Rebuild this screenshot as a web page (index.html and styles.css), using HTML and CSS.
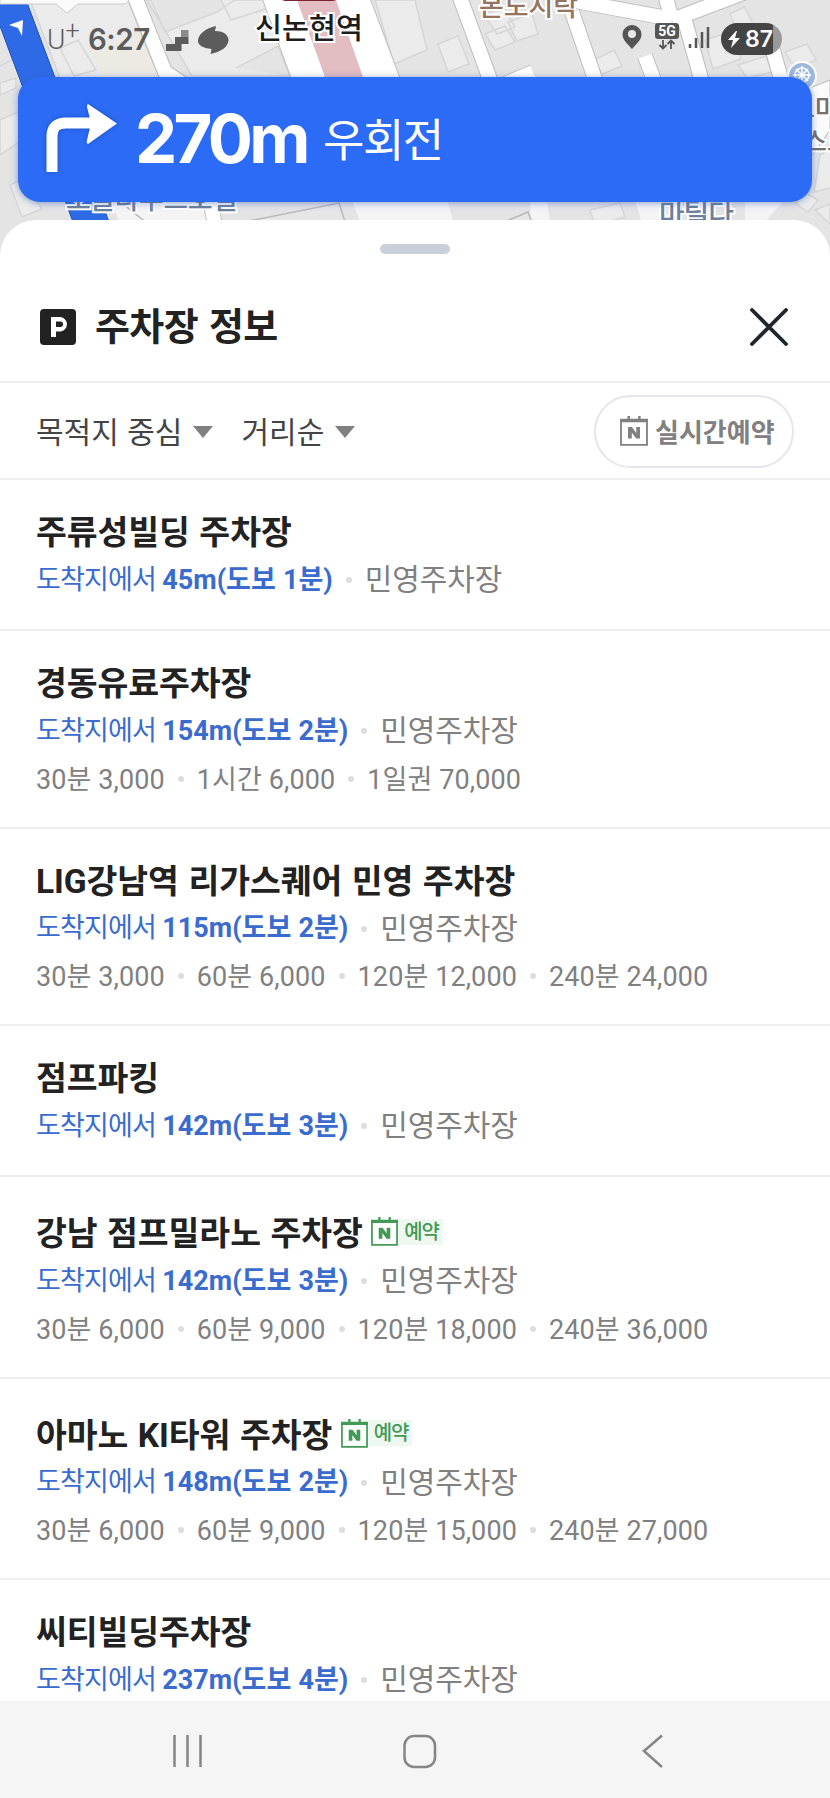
FILE: index.html
```html
<!DOCTYPE html>
<html lang="ko">
<head>
<meta charset="utf-8">
<title>주차장 정보</title>
<link rel="stylesheet" href="styles.css">
</head>
<body>
<svg width="0" height="0" class="sprite">
  <symbol id="cal" viewBox="0 0 28 30"><path d="M1 4h26v24.800H1z" fill="none" stroke="currentColor" stroke-width="1.800"/><path d="M0 2.800h28v3.400H0zM7.500 0h2.400v4H7.500zM18.200 0h2.400v4h-2.400z" fill="currentColor"/><path d="M8 22.500V11h4l4.200 5.900V11H20v11.500h-3.900l-4.300-6v6z" fill="currentColor"/></symbol>
</svg>
<div class="screen">
  <svg class="map" viewBox="0 0 830 260">
    <rect width="830" height="260" fill="#e4e4e4"/>
    <g fill="#ebebeb" stroke="#d6d6d6" stroke-width="1.500">
      <path d="M30 0h98l30 78H60zM60 48l18-8 18 30-22 6zM134 0l13 0 45 76h100L265 0h-30l-18 12-52 20-14-32zM221 0l10 20 50-16M236 68l42-22 12 30M0 66l12-6M0 83l16-5v10L0 95zM0 120l22-10v30L0 155z"/>
      <path d="M375 0h40l12 50-33 14zM438 44l20-8 11 28-21 8zM485 34l20-8 10 16-20 8zM484 14l20-5 11 18-18 7zM508 22l24-8 6 20-21 7zM594 60l20-10 8 16-20 8zM705 40l28-9 8 28-28 10zM738 65l28-9 6 16-25 6zM785 52l22-8 9 16-20 9zM730 14l14-7 20 36-18 8zM10 185l12-6 20 30-20 8zM590 210l30-7 5 14-30 8zM820 155l14-8v40l-20 5zM800 190l18 10-10 12-12-8zM815 210l15-6v20z"/>
    </g>
    <path d="M92 52l46-22 21 48H101z" fill="#edeae3"/>
    <path d="M110 200h95l8 30h-90zM352 200h95l9 30h-93zM530 200h17l4 30h-20zM635 200h25l14 30h-30zM745 200h40l-28 30h-12z" fill="#f4f4f4"/>
    <path d="M490 228l38-16 6 16M229 225l110-22 8 25M118 200l30 24" fill="#e6e6e6" stroke="#b8b8b8" stroke-width="1.500"/>
    <path d="M830 80l-40 16v90l40-56z" fill="#fbfbfb" stroke="#bbb"/>
    <g fill="none" stroke="#bdbdbd" stroke-width="16"><path d="M133-8l32 80 30 20M458-8l33 90M572 12l24 70M570 0L672 19M682 10l20 72M672 20l92-35M665-6l7 26M645 56l11 30M770 40l13 46M505 84l28-12M209 195l8 40"/></g>
    <g fill="none" stroke="#fff" stroke-width="14"><path d="M133-8l32 80 30 20M458-8l33 90M572 12l24 70M570 0L672 19M682 10l20 72M672 20l92-35M665-6l7 26M645 56l11 30M770 40l13 46M505 84l28-12M209 195l8 40"/></g>
    <path d="M262-2h108l30 80H291z" fill="#fff" stroke="#bdbdbd"/>
    <path d="M297 0h39l28 80h-38z" fill="#e2bdc2"/>
    <rect x="278" y="-20" width="62" height="21" rx="8" fill="#7d2333"/>
    <path d="M-6-10L26 0 112 230 76 230-6 10z" fill="#2f6ae6" stroke="#1c4fba"/>
    <path d="M9 25l14-5-1 16-4-8z" fill="#fff"/>
    <path d="M0-2h129q0 6-6 6H78l-11 9-11-9H0z" fill="#fafafa" stroke="#ccc"/>
    <g class="place">
      <text x="255" y="39" font-size="29" textLength="108" lengthAdjust="spacingAndGlyphs" fill="#1d1d1d">신논현역</text>
      <text x="479" y="16" font-size="27" textLength="99" fill="#94745c">본도시락</text>
      <text x="66" y="209" font-size="27" textLength="171" fill="#6f819c">오클라우드호텔</text>
      <text x="659" y="224" font-size="28" textLength="75" fill="#6f819c">마틸다</text>
      <text x="791" y="118" font-size="26" fill="#77706a">꼬마</text>
      <text x="803" y="151" font-size="26" fill="#77706a">스토</text>
    </g>
    <circle cx="802" cy="76" r="14" fill="#9bb8df" stroke="#fff" stroke-width="2"/>
    <g stroke="#fff" stroke-width="1.500" fill="none"><circle cx="802" cy="75" r="7"/><path d="M793 75h18M802 66v18M796 69l12 12M808 69l-12 12"/></g>
  </svg>
  <header class="status">
    <span class="carrier">U<sup>+</sup></span><span class="time">6:27</span>
    <svg class="apps" viewBox="0 0 64 30"><path d="M0 27v-7h9v-7h13.500v7h-7v7z" fill="#5c5c5c"/><path d="M15 6h7.500v7H15z" fill="#8b8b8b"/><path d="M32 17c0-7 8-13 18-15l-1 5c10 0 13.500 5 13.500 9 0 7-8 12-18 14l1-5c-9-1-13.500-4-13.500-8z" fill="#5c5c5c"/></svg>
    <span class="gap"></span>
    <svg class="sys" viewBox="0 0 90 32"><path d="M10 2a9.500 9.500 0 0 1 9.500 9.500C19.500 17 14 21 10 26 6 21 .5 17 .5 11.500A9.500 9.500 0 0 1 10 2z" fill="#555"/><circle cx="10" cy="11" r="4" fill="#e8e8e8"/><rect x="33" y="0" width="24" height="16" rx="3" fill="#555"/><text x="45" y="12.800" text-anchor="middle" class="g5">5G</text><path d="M41 17v8M37.500 22l3.500 3.500 3.500-3.500M49 26v-8M45.500 21l3.500-3.500 3.500 3.500" fill="none" stroke="#555" stroke-width="1.800"/><path d="M68 25v-4M74 25V15M80 25V9M86 25V4" stroke="#555" stroke-width="2.500"/></svg>
    <span class="battery"><svg viewBox="0 0 12 17"><path d="M8 0L0 9h5l-2 8 9-10H7l2-7z" fill="#fff"/></svg>87</span>
  </header>
  <section class="turn">
    <svg viewBox="0 0 72 70"><path d="M6 69V33Q6 20 20 20H46" fill="none" stroke="#fff" stroke-width="11"/><path d="M42 1L71 20.500 42 41Q40 40 41 37L45 20 41 4Q41 1 42 1z" fill="#fff"/></svg>
    <strong>270m</strong><span>우회전</span>
  </section>
  <main class="sheet">
    <div class="handle"></div>
    <div class="head">
      <svg class="p" viewBox="0 0 36 36"><rect width="36" height="36" rx="4" fill="#222"/><path fill-rule="evenodd" d="M11 8h9.500a7.300 7.300 0 0 1 0 14.500H16V28h-5zM16 12.500v5.500h4.300a2.700 2.700 0 0 0 0-5.500z" fill="#fff"/></svg>
      <h1>주차장 정보</h1>
      <svg class="x" viewBox="0 0 38 38"><path d="M2 2l34 34M36 2L2 36" stroke="#20262c" stroke-width="3.800" stroke-linecap="round"/></svg>
    </div>
    <div class="filters">
      <span>목적지 중심</span><i></i><span>거리순</span><i></i>
      <button><svg><use href="#cal"/></svg>실시간예약</button>
    </div>
    <ul>
      <li><h2>주류성빌딩 주차장</h2><p class="meta"><span>도착지에서 <b>45m(도보 1분)</b></span><em>민영주차장</em></p></li>
      <li><h2>경동유료주차장</h2><p class="meta"><span>도착지에서 <b>154m(도보 2분)</b></span><em>민영주차장</em></p><p class="fees"><span>30분 3,000</span><span>1시간 6,000</span><span>1일권 70,000</span></p></li>
      <li><h2>LIG강남역 리가스퀘어 민영 주차장</h2><p class="meta"><span>도착지에서 <b>115m(도보 2분)</b></span><em>민영주차장</em></p><p class="fees"><span>30분 3,000</span><span>60분 6,000</span><span>120분 12,000</span><span>240분 24,000</span></p></li>
      <li><h2>점프파킹</h2><p class="meta"><span>도착지에서 <b>142m(도보 3분)</b></span><em>민영주차장</em></p></li>
      <li class="tagged"><h2>강남 점프밀라노 주차장<span class="tag"><svg><use href="#cal"/></svg><small>예약</small></span></h2><p class="meta"><span>도착지에서 <b>142m(도보 3분)</b></span><em>민영주차장</em></p><p class="fees"><span>30분 6,000</span><span>60분 9,000</span><span>120분 18,000</span><span>240분 36,000</span></p></li>
      <li class="tagged"><h2>아마노 KI타워 주차장<span class="tag"><svg><use href="#cal"/></svg><small>예약</small></span></h2><p class="meta"><span>도착지에서 <b>148m(도보 2분)</b></span><em>민영주차장</em></p><p class="fees"><span>30분 6,000</span><span>60분 9,000</span><span>120분 15,000</span><span>240분 27,000</span></p></li>
      <li><h2>씨티빌딩주차장</h2><p class="meta"><span>도착지에서 <b>237m(도보 4분)</b></span><em>민영주차장</em></p></li>
    </ul>
  </main>
  <nav>
    <svg viewBox="0 0 830 97"><g fill="none" stroke="#858585" stroke-width="2.500"><path d="M174.500 34v32M187.500 34v32M200.500 34v32"/><rect x="404.500" y="35" width="30.500" height="31" rx="9.500"/><path d="M662 34.500L644 50l18 16"/></g></svg>
  </nav>
</div>
</body>
</html>
```
FILE: styles.css
```css
* { box-sizing: border-box; margin: 0; padding: 0; }
body { background: #fff; font-family: Roboto, "Noto Sans CJK KR", sans-serif; }
svg { display: block; flex: none; }
.sprite { position: absolute; }
.screen { position: relative; width: 830px; height: 1798px; overflow: hidden; display: flex; flex-direction: column; }
.map { position: absolute; left: 0; top: 0; width: 830px; height: 260px; }
.place text { font-family: "Noto Sans CJK KR", sans-serif; font-weight: 500; paint-order: stroke; stroke: #fff; stroke-width: 4px; }
.status { position: relative; height: 77px; padding: 1px 48px 0 47px; display: flex; align-items: center; color: #5c5c5c; }
.carrier { font: 300 28px Roboto, sans-serif; width: 41px; white-space: nowrap; }
.carrier sup { font-size: 25px; line-height: 0; }
.time { font: 600 29.500px Inter, sans-serif; width: 78px; letter-spacing: -0.5px; }
.apps { width: 64px; height: 30px; }
.gap { flex: 1; }
.sys { width: 90px; height: 32px; margin-right: 9px; }
.g5 { font: 700 14px Roboto, sans-serif; fill: #fff; }
.battery { width: 61px; height: 32px; border-radius: 16px; background: linear-gradient(90deg, #444 52px, #999 52px); color: #fff; display: flex; align-items: center; gap: 5px; padding-left: 7px; font: 600 23px Inter, sans-serif; }
.battery svg { width: 12px; height: 17px; }
.turn { position: relative; flex: none; height: 125px; margin: 0 18px; padding-left: 28px; border-radius: 22px; background: #2c6bf5; box-shadow: 0 1px 7px rgba(50,90,180,.55); color: #fff; display: flex; align-items: center; }
.turn svg { width: 72px; height: 70px; margin-top: -3px; filter: drop-shadow(0 0 2px #1c4fba); }
.turn strong { font: 700 67px/80px Inter, sans-serif; letter-spacing: -3.700px; width: 188px; margin: -2px 0 0 17px; white-space: nowrap; }
.turn span { font-size: 45px; line-height: 60px; letter-spacing: -1.500px; padding-top: 5px; }
.sheet { position: relative; flex: 1; min-height: 0; overflow: hidden; margin-top: 18px; background: #fff; border-radius: 36px 36px 0 0; }
.handle { width: 70px; height: 10px; margin: 24px auto 0; border-radius: 5px; background: #c9d0da; }
.head { height: 129px; padding: 18px 42px 0 40px; border-bottom: 2px solid #eee; display: flex; align-items: center; }
.p { width: 36px; height: 36px; }
.x { width: 38px; height: 38px; margin-left: auto; }
.head h1 { margin-left: 19px; font-size: 38px; line-height: 50px; letter-spacing: -0.6px; word-spacing: 2px; color: #222; }
.filters { height: 97px; padding: 0 36px; border-bottom: 2px solid #eee; display: flex; align-items: center; color: #444; font-size: 30px; word-spacing: 1px; }
.filters span { padding-bottom: 2px; }
.filters i { border: 10px solid transparent; border-top: 12px solid #808080; border-bottom: 0; margin: 3px 28px 0 11px; }
.filters button { margin: 2px 0 0 auto; width: 200px; height: 73px; border: 2px solid #e4e6ec; border-radius: 37px; background: #fff; color: #808080; font: 700 26px "Noto Sans CJK KR", sans-serif; display: flex; align-items: center; padding: 0 0 2px 24px; gap: 7px; }
.filters button svg { width: 28px; height: 30px; }
ul { list-style: none; }
li { height: 197.500px; padding: 30px 36px 0; border-bottom: 2px solid #eee; }
li:nth-child(1), li:nth-child(4) { height: 151px; }
.tagged { height: 201.500px; padding-top: 34px; }
h2 { display: flex; height: 46px; align-items: center; font-size: 33.500px; line-height: 46px; letter-spacing: -0.06px; word-spacing: 1.300px; color: #222; white-space: nowrap; }
.tag { display: flex; align-items: center; margin: -5px 0 0 8.500px; height: 28px; color: #439a57; }
.tag svg { width: 27px; height: 29px; }
.tag small { padding: 0 4px 0 6px; font-size: 20px; line-height: 26px; font-weight: 500; letter-spacing: -1.200px; background: #eff7f1; }
p { display: flex; align-items: center; white-space: nowrap; color: #808080; }
.meta { height: 48px; margin-top: -3px; }
.meta span { color: #3a6bce; font-size: 27px; letter-spacing: -0.850px; word-spacing: 0.5px; }
.meta b { letter-spacing: 0; }
em { font-style: normal; font-size: 30px; letter-spacing: -0.1px; }
.fees { height: 50px; font-size: 27px; letter-spacing: 0.1px; }
em::before, .fees span + span::before { content: ""; display: inline-block; width: 6px; height: 6px; margin: 0 13px 0 13px; border-radius: 3px; background: #ddd; vertical-align: 7px; }
nav { position: relative; flex: none; height: 97px; background: #f5f5f5; }
nav svg { width: 830px; height: 97px; }
```
